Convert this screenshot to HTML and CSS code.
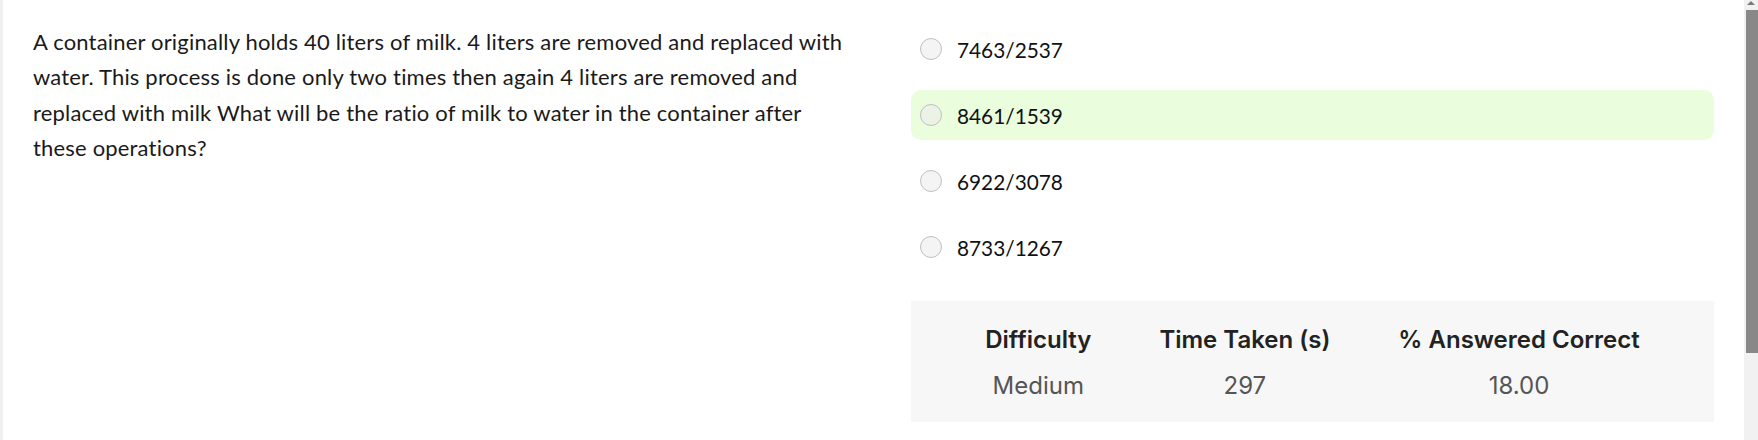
FILE: index.html
```html
<!DOCTYPE html>
<html lang="en">
<head>
<meta charset="utf-8">
<title>Question</title>
<link rel="stylesheet" href="styles.css">
</head>
<body>
<div class="page">
  <main class="main">
    <section class="question">
      <p class="question-text">A container originally holds 40 liters of milk. 4 liters are removed and replaced with water. This process is done only two times then again 4 liters are removed and replaced with milk What will be the ratio of milk to water in the container after these operations?</p>
    </section>
    <section class="answers">
      <ul class="options">
        <li class="option"><span class="radio"></span><span class="option-label">7463/2537</span></li>
        <li class="option option-correct"><span class="radio"></span><span class="option-label">8461/1539</span></li>
        <li class="option"><span class="radio"></span><span class="option-label">6922/3078</span></li>
        <li class="option"><span class="radio"></span><span class="option-label">8733/1267</span></li>
      </ul>
      <div class="stats">
        <table class="stats-table">
          <thead>
            <tr><th>Difficulty</th><th>Time Taken (s)</th><th>% Answered Correct</th></tr>
          </thead>
          <tbody>
            <tr><td>Medium</td><td>297</td><td>18.00</td></tr>
          </tbody>
        </table>
      </div>
    </section>
  </main>
  <div class="scrollbar">
    <span class="scroll-arrow"></span>
    <span class="scroll-thumb"></span>
  </div>
</div>
</body>
</html>
```

FILE: styles.css
```css
html, body {
  margin: 0;
  padding: 0;
  background: #ffffff;
}

body {
  height: 440px;
  overflow: hidden;
}

.page {
  display: flex;
  height: 440px;
}

.main {
  flex: 1;
  display: grid;
  grid-template-columns: 816px 1fr;
  column-gap: 62px;
  align-items: start;
  border-left: 3px solid #f0f0f0;
  padding: 24px 30px 0 30px;
}

.question-text {
  margin: 0;
  font-family: Lato, "Open Sans", sans-serif;
  font-size: 22px;
  letter-spacing: 0.18px;
  line-height: 35.4px;
  color: #1a1a1a;
}

.options {
  list-style: none;
  margin: 0;
  padding: 0;
  display: flex;
  flex-direction: column;
  gap: 16px;
}

.option {
  display: flex;
  align-items: center;
  gap: 15px;
  height: 50px;
  padding-left: 9px;
  border-radius: 10px;
  font-family: Lato, "Open Sans", sans-serif;
  font-size: 20.8px;
  color: #111111;
}

.option-correct {
  background: #eafddd;
}

.radio {
  width: 20px;
  height: 20px;
  border: 1.5px solid #c0c0c0;
  border-radius: 50%;
  background: rgba(236, 236, 236, 0.6);
  flex: none;
}

.stats {
  margin-top: 29px;
  background: #f7f7f7;
  padding: 25px 0 22px;
}

.stats-table {
  margin: 0 auto;
  border-collapse: collapse;
  font-family: Inter, "Noto Sans", sans-serif;
  font-size: 24px;
  line-height: 28px;
}

.stats-table th {
  font-weight: 600;
  color: #222222;
  padding: 0 34px 18px;
  text-align: center;
}

.stats-table td {
  font-weight: 400;
  color: #555555;
  padding: 0 34px;
  text-align: center;
}

.scrollbar {
  width: 14px;
  flex: none;
  background: #f1f1f1;
  display: flex;
  flex-direction: column;
  align-items: flex-end;
}

.scroll-arrow {
  width: 0;
  height: 0;
  margin: 1px 3px 5px 0;
  border-left: 4px solid transparent;
  border-right: 4px solid transparent;
  border-bottom: 4px solid #7a7a7a;
}

.scroll-thumb {
  width: 12px;
  height: 343px;
  background: #888888;
}
```
